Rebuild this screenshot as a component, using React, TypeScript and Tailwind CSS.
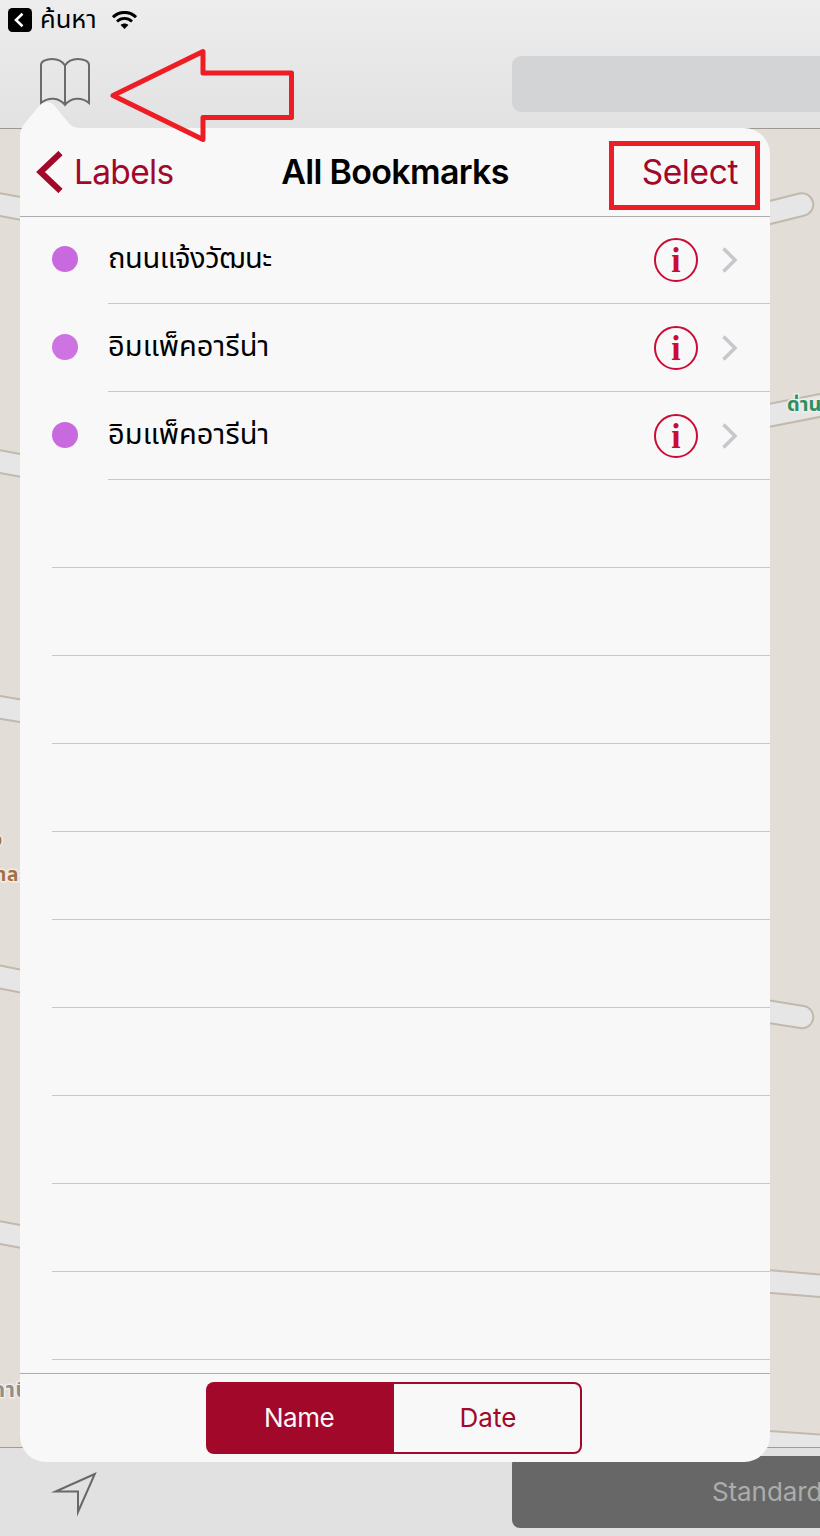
const bookmarks = [
  { id: 1, name: "ถนนแจ้งวัฒนะ", dot: "mb-[3px] bg-[#c869e0]", spacing: "tracking-[-0.4px]" },
  { id: 2, name: "อิมแพ็คอารีน่า", dot: "mb-[2px] bg-[#cd73e2]", spacing: "tracking-[0.1px]" },
  { id: 3, name: "อิมแพ็คอารีน่า", dot: "mb-[2px] bg-[#c869e0]", spacing: "tracking-[0.1px]" },
];

const emptyRows = Array.from({ length: 10 }, (_, i) => i);

// each road is drawn twice: casing, then fill
const roads = [
  "M-20 201 L40 212",
  "M-20 458 L40 469",
  "M-20 704 L40 714",
  "M-20 973 L40 985",
  "M-20 1229 L40 1240",
  "M740 220 L802 204.5",
  "M740 421 L840 401.5",
  "M740 1007 L802 1017",
  "M740 1279 L840 1287.5",
];

function StatusBar() {
  return (
    <div className="flex h-10 items-center pl-2">
      <svg width="24" height="24" viewBox="0 0 24 24">
        <rect width="24" height="24" rx="4.5" fill="#000" />
        <path d="M14.5 5.8 L8 12 L14.5 18.2" fill="none" stroke="#fff" strokeWidth="2.6" />
      </svg>
      <span className="mb-0.5 ml-[8px] w-[58px] whitespace-nowrap text-[25.5px] leading-[38px] text-black">ค้นหา</span>
      <svg className="ml-[14px]" width="25" height="19" viewBox="0 0 25 19" fill="none" stroke="#000">
        <path d="M1 6.2 C7.5 -0.2 17.5 -0.2 24 6.2" strokeWidth="3" />
        <path d="M5 10.4 C9.3 6.3 15.7 6.3 20 10.4" strokeWidth="2.8" />
        <path d="M8.6 14 C10.8 12 14.2 12 16.4 14 L12.5 18 Z" fill="#000" stroke="none" />
      </svg>
    </div>
  );
}

function Toolbar() {
  return (
    <div className="flex h-[88px] items-start justify-between">
      <svg className="ml-[39px] mt-[17px]" width="53" height="50" viewBox="0 0 53 50" fill="none" stroke="#6b6b6b" strokeWidth="2">
        <path d="M26 8.5 C23 3.5 18.5 2 13 2 C7 2 2 4.5 2 8 V46 C9 40 20 40 26 48 C32 40 43 40 50 46 V8 C50 4.5 45 2 39 2 C33.5 2 29 3.5 26 8.5 Z" />
        <path d="M26 8 V48" />
      </svg>
      <div className="mt-4 h-14 w-[308px] rounded-l-[9px] bg-[#d2d4d6]" />
    </div>
  );
}

function MapView() {
  return (
    <svg className="block border-t border-[#9c9993]" width="820" height="1319" viewBox="0 129 820 1318">
      <rect y="128" width="820" height="1320" fill="#e2ddd6" />
      <g strokeLinecap="round" fill="none">
        {roads.map((d) => (
          <path key={d} d={d} stroke="#c2b9ad" strokeWidth="24.5" />
        ))}
        {roads.map((d) => (
          <path key={d} d={d} stroke="#e6e6e6" strokeWidth="20.5" />
        ))}
      </g>
      <path d="M740 1429 L840 1436 V1460 H740 Z" fill="#e6e6e6" stroke="#c2b9ad" strokeWidth="2" />
      <g fontWeight="700" stroke="#f0ede9" strokeWidth="3" paintOrder="stroke">
        <text x="787" y="411" fontSize="20" fill="#2f8f61">ด่าน</text>
        <text x="-9" y="846" fontSize="19" fill="#a3703f">อ</text>
        <text x="-15" y="881" fontSize="19" letterSpacing="0.6" fill="#a3703f">ตาลก</text>
        <text x="-8" y="1397" fontSize="21" letterSpacing="0.6" fill="#8f8f8b">ถานี</text>
      </g>
    </svg>
  );
}

function BottomBar() {
  return (
    <div className="flex h-[89px] justify-between border-t border-[#9c9c9c] bg-[#e1e1e1]">
      <svg className="ml-[50px] mt-[23px]" width="50" height="46" viewBox="0 0 50 46" fill="none" stroke="#686868" strokeWidth="2">
        <path d="M44.8 3 L5.5 20.5 H28 V41 Z" strokeMiterlimit="10" />
      </svg>
      <div className="mt-2 h-[72px] w-[308px] overflow-hidden rounded-l-lg bg-[#676767] pl-[200px]">
        <span className="text-[26px] leading-[72px] tracking-[-0.1px] text-[#acacac]">Standard</span>
      </div>
    </div>
  );
}

function InfoIcon() {
  return (
    <svg width="44" height="44" viewBox="0 0 44 44">
      <circle cx="22" cy="22" r="21" fill="none" stroke="#cb0a35" strokeWidth="2" />
      <text
        transform="translate(22 34) scale(0.92 1)"
        textAnchor="middle"
        fontSize="36.5"
        fontWeight="700"
        fill="#cb0a35"
        className="font-['Liberation_Serif',serif]"
      >
        i
      </text>
    </svg>
  );
}

function Popover() {
  return (
    <div className="absolute left-5 top-32 flex h-[1334px] w-[750px] flex-col rounded-[26px] rounded-tl-[8px] bg-[#f8f8f8]">
      {/* arrow pointing at the bookmarks button */}
      <svg className="absolute left-0 top-[-27px]" width="66" height="36" viewBox="0 0 66 36">
        <path d="M0 36 C0 30 2 26 5 22 L20 4 Q27 -2 34 4 L47 20 C52 26 54 27 64 27 V36 Z" fill="#f8f8f8" />
      </svg>

      <div className="relative flex h-[89px] items-center justify-between border-b border-[#acacac]">
        <button className="flex items-center pl-4 text-[#a20829]">
          <svg width="27" height="42" viewBox="0 0 27 42">
            <path d="M24.5 2 L4.5 21 L24.5 40" fill="none" stroke="#a20829" strokeWidth="6" />
          </svg>
          <span className="ml-[11px] text-[33.5px] tracking-[-0.7px]">Labels</span>
        </button>
        <button className="pr-8 text-[33.5px] tracking-[-0.4px] text-[#a20829]">Select</button>
        <h1 className="absolute inset-x-0 pb-px text-center text-[34px] font-semibold tracking-[-0.7px] text-black">
          All Bookmarks
        </h1>
      </div>

      <ul className="grow">
        {bookmarks.map((b) => (
          <li key={b.id} className="flex h-[88px] items-center pl-8 first:h-[87px]">
            <span className={`h-[26px] w-[26px] rounded-full ${b.dot}`} />
            <div className="ml-[30px] flex h-full grow items-center border-b border-[#c8c7cc] pr-8">
              <span className={`grow whitespace-nowrap pb-1 text-[29px] text-black ${b.spacing}`}>{b.name}</span>
              <InfoIcon />
              <svg className="ml-6" width="16" height="26" viewBox="0 0 16 26">
                <path d="M1.5 1.5 L13 13 L1.5 24.5" fill="none" stroke="#c7c7cc" strokeWidth="3.6" />
              </svg>
            </div>
          </li>
        ))}
        {emptyRows.map((i) => (
          <li key={i} className="ml-8 h-[88px] border-b border-[#c8c7cc]" />
        ))}
      </ul>

      <div className="flex h-[89px] justify-center border-t border-[#acacac] pr-0.5 pt-2">
        <div className="flex h-[72px] w-[376px] rounded-lg bg-[#a20829] p-0.5 text-[26px] leading-[68px]">
          <button className="w-1/2 pr-1 tracking-[-0.5px] text-[#f8f8f8]">Name</button>
          <button className="w-1/2 rounded-r-md bg-[#f8f8f8] pl-0.5 text-[#a20829]">Date</button>
        </div>
      </div>
    </div>
  );
}

export default function App() {
  return (
    <div className="relative flex h-[1536px] w-[820px] flex-col overflow-hidden bg-[#e1e1e1] font-['Inter','Noto_Sans_Thai',sans-serif]">
      <header className="bg-linear-to-b from-[#ededed] to-[#e2e2e2]">
        <StatusBar />
        <Toolbar />
      </header>
      <MapView />
      <BottomBar />
      <Popover />

      {/* red callouts */}
      <svg className="absolute left-[108px] top-[46px]" width="190" height="100" viewBox="0 0 190 100">
        <path d="M5 49.5 L95 5.5 V27 H183.5 V71.5 H95 V93.5 Z" fill="none" stroke="#ee1c25" strokeWidth="5" strokeLinejoin="round" />
      </svg>
      <div className="absolute left-[609px] top-[141px] h-[69px] w-[151px] border-[5px] border-[#ee1c25]" />
    </div>
  );
}
